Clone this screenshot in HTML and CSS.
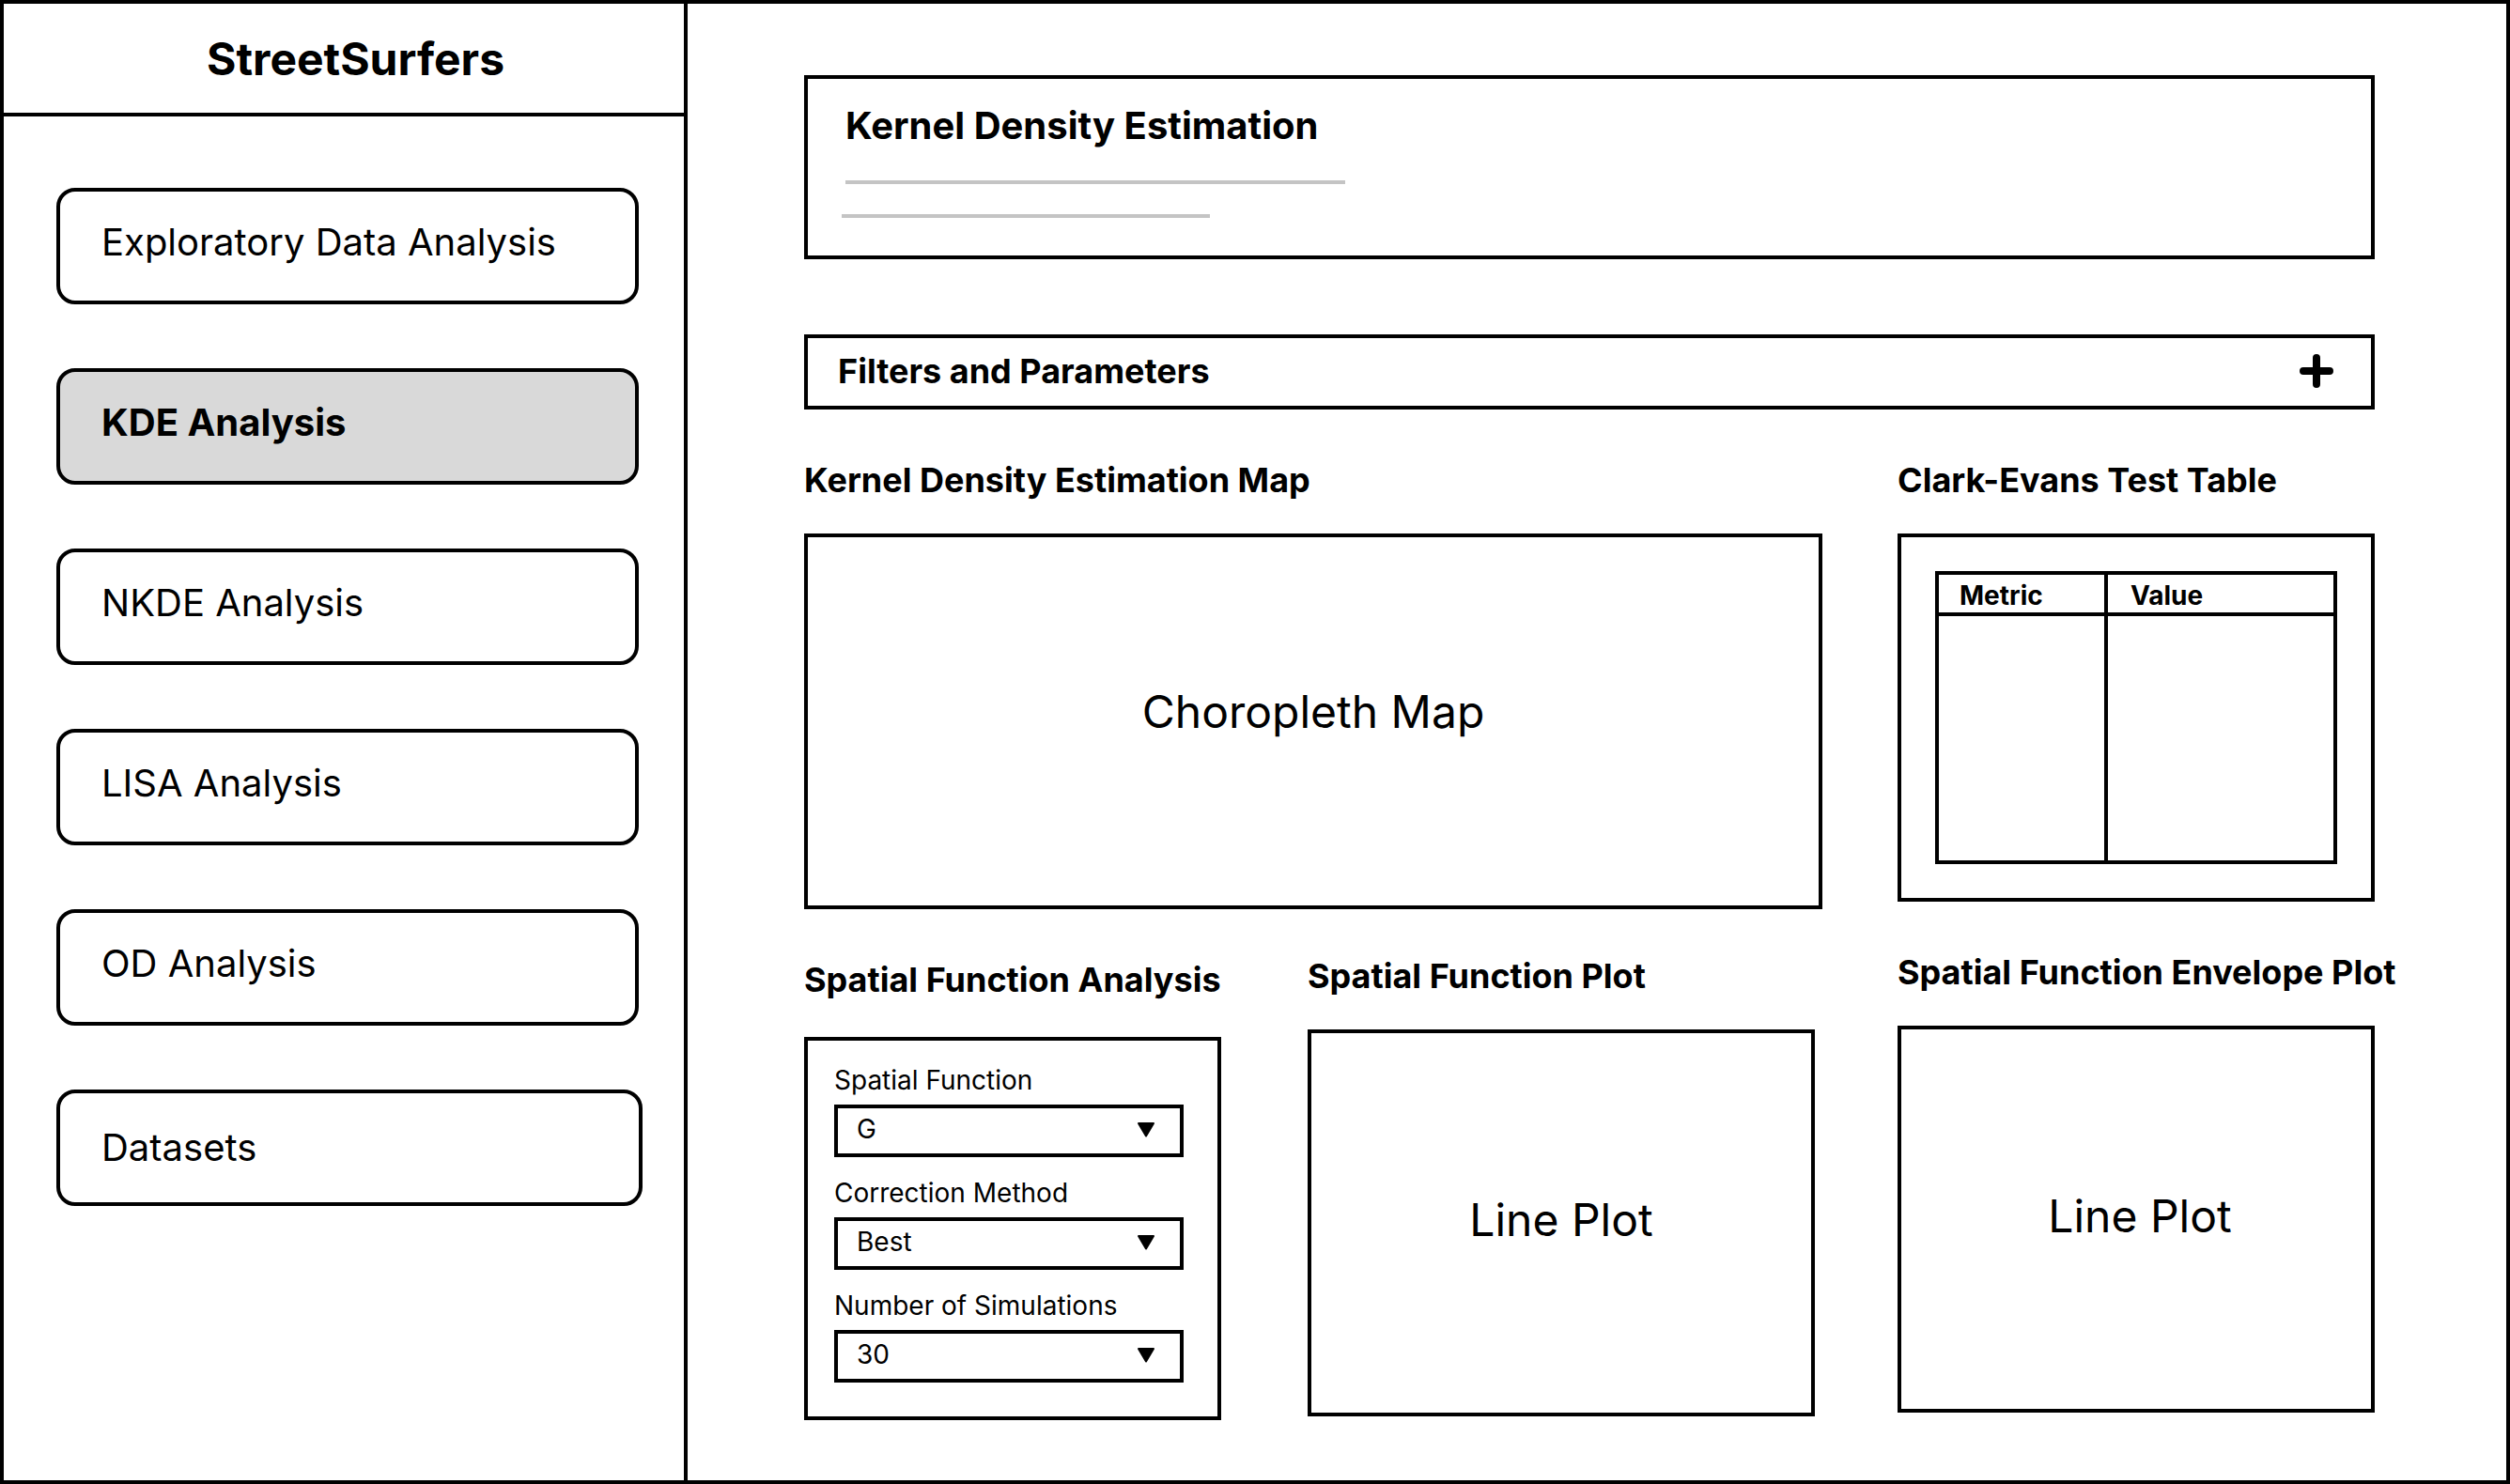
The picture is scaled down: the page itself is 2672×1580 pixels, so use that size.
FILE: index.html
```html
<!DOCTYPE html>
<html lang="en">
<head>
  <meta charset="utf-8">
  <meta name="viewport" content="width=device-width, initial-scale=1">
  <title>StreetSurfers – KDE Analysis</title>
  <link rel="stylesheet" href="styles.css">
</head>
<body>
  <div class="app">
    <aside class="sidebar">
      <header class="brand">StreetSurfers</header>
      <nav class="nav" aria-label="Analyses">
        <a class="nav-link" href="#eda">Exploratory Data Analysis</a>
        <a class="nav-link nav-link-active" href="#kde" aria-current="page">KDE Analysis</a>
        <a class="nav-link" href="#nkde">NKDE Analysis</a>
        <a class="nav-link" href="#lisa">LISA Analysis</a>
        <a class="nav-link" href="#od">OD Analysis</a>
        <a class="nav-link nav-link-data" href="#datasets">Datasets</a>
      </nav>
    </aside>

    <main class="main">
      <section class="intro">
        <h1 class="intro-title">Kernel Density Estimation</h1>
        <div class="intro-line intro-line-long"></div>
        <div class="intro-line intro-line-short"></div>
      </section>

      <button class="filters" type="button" aria-expanded="false">
        <span>Filters and Parameters</span>
        <svg class="plus" viewBox="0 0 36 36" aria-hidden="true">
          <path d="M18 4v28M4 18h28" fill="none" stroke="#000" stroke-width="8" stroke-linecap="round"/>
        </svg>
      </button>

      <div class="board">
        <div class="column column-wide">
          <section class="panel">
            <h2 class="panel-title">Kernel Density Estimation Map</h2>
            <div class="box map">Choropleth Map</div>
          </section>

          <div class="functions">
            <section class="panel panel-form">
              <h2 class="panel-title">Spatial Function Analysis</h2>
              <form class="box form">
                <div class="field">
                  <label class="field-label" for="function">Spatial Function</label>
                  <div class="select">
                    <select class="select-input" id="function"><option>G</option></select>
                    <svg class="select-arrow" viewBox="0 0 20 16" aria-hidden="true"><path d="M2 1h16L10 14.500z" stroke="#000" stroke-width="2" stroke-linejoin="round"/></svg>
                  </div>
                </div>
                <div class="field">
                  <label class="field-label" for="correction">Correction Method</label>
                  <div class="select">
                    <select class="select-input" id="correction"><option>Best</option></select>
                    <svg class="select-arrow" viewBox="0 0 20 16" aria-hidden="true"><path d="M2 1h16L10 14.500z" stroke="#000" stroke-width="2" stroke-linejoin="round"/></svg>
                  </div>
                </div>
                <div class="field">
                  <label class="field-label" for="simulations">Number of Simulations</label>
                  <div class="select">
                    <select class="select-input" id="simulations"><option>30</option></select>
                    <svg class="select-arrow" viewBox="0 0 20 16" aria-hidden="true"><path d="M2 1h16L10 14.500z" stroke="#000" stroke-width="2" stroke-linejoin="round"/></svg>
                  </div>
                </div>
              </form>
            </section>

            <section class="panel">
              <h2 class="panel-title">Spatial Function Plot</h2>
              <div class="box plot">Line Plot</div>
            </section>
          </div>
        </div>

        <div class="column">
          <section class="panel">
            <h2 class="panel-title">Clark-Evans Test Table</h2>
            <div class="box table-box">
              <table class="results">
                <thead>
                  <tr><th class="metric" scope="col">Metric</th><th class="value" scope="col">Value</th></tr>
                </thead>
                <tbody>
                  <tr><td></td><td></td></tr>
                </tbody>
              </table>
            </div>
          </section>

          <section class="panel">
            <h2 class="panel-title">Spatial Function Envelope Plot</h2>
            <div class="box plot plot-envelope">Line Plot</div>
          </section>
        </div>
      </div>
    </main>
  </div>
</body>
</html>
```
FILE: styles.css
```css
* {
  box-sizing: border-box;
}

body {
  margin: 0;
  background: #fff;
  color: #000;
  font-family: Inter, "Liberation Sans", sans-serif;
}

.app {
  display: grid;
  grid-template-columns: 728px minmax(0, 1fr);
  min-height: 100vh;
  border: 4px solid #000;
}

/* Sidebar */

.sidebar {
  border-right: 4px solid #000;
}

.brand {
  padding: 30px 24px 28px 216px;
  border-bottom: 4px solid #000;
  font-size: 48px;
  line-height: 58px;
  font-weight: 700;
}

.nav {
  display: flex;
  flex-direction: column;
  gap: 68px;
  padding: 76px 48px 76px 56px;
}

.nav-link {
  padding: 30px 44px 38px;
  border: 4px solid #000;
  border-radius: 20px;
  color: inherit;
  font-size: 40px;
  line-height: 48px;
  text-decoration: none;
}

.nav-link-active {
  background: #d9d9d9;
  font-weight: 700;
}

.nav-link-data {
  margin-right: -4px;
  padding-block: 34px;
}

/* Main area */

.main {
  padding: 76px 140px 64px 124px;
}

.intro {
  padding: 26px 40px 40px;
  border: 4px solid #000;
}

.intro-title {
  margin: 0 0 34px;
  font-size: 40px;
  line-height: 48px;
  font-weight: 700;
}

.intro-line {
  height: 4px;
  background: #c4c4c4;
}

.intro-line-long {
  max-width: 532px;
}

.intro-line-short {
  max-width: 392px;
  margin: 32px 0 0 -4px;
}

.filters {
  display: flex;
  align-items: center;
  justify-content: space-between;
  width: 100%;
  min-height: 80px;
  margin-top: 80px;
  padding: 0 40px 2px 32px;
  border: 4px solid #000;
  background: none;
  color: inherit;
  font: 700 36px/46px Inter, "Liberation Sans", sans-serif;
}

.plus {
  width: 36px;
  height: 36px;
}

.board {
  display: grid;
  grid-template-columns: minmax(0, 1fr) 508px;
  gap: 80px;
  margin-top: 52px;
}

.column {
  display: flex;
  flex-direction: column;
  gap: 52px;
}

.column-wide {
  gap: 48px;
}

.panel-title {
  margin: 0 0 34px;
  font-size: 36px;
  line-height: 46px;
  font-weight: 700;
  white-space: nowrap;
}

.box {
  border: 4px solid #000;
}

.map,
.plot {
  display: flex;
  align-items: center;
  justify-content: center;
  font-size: 48px;
  line-height: 58px;
}

.map {
  min-height: 400px;
  padding-bottom: 20px;
}

.plot {
  min-height: 412px;
  padding-bottom: 6px;
}

.plot-envelope {
  padding-left: 8px;
}

.functions {
  display: grid;
  grid-template-columns: 444px minmax(0, 1fr);
  gap: 92px;
  padding-right: 8px;
}

/* Function form */

.panel-form {
  padding-top: 4px;
}

.panel-form .panel-title {
  margin-bottom: 38px;
}

.form {
  display: flex;
  flex-direction: column;
  gap: 20px;
  padding: 24px 36px 36px 28px;
}

.field {
  display: flex;
  flex-direction: column;
  gap: 8px;
}

.field-label {
  font-size: 28px;
  line-height: 36px;
}

.select {
  display: grid;
  align-items: center;
}

.select-input,
.select-arrow {
  grid-area: 1 / 1;
}

.select-input {
  width: 100%;
  height: 56px;
  padding: 0 60px 4px 20px;
  border: 4px solid #000;
  border-radius: 0;
  appearance: none;
  background: #fff;
  color: inherit;
  font: 28px/36px Inter, "Liberation Sans", sans-serif;
}

.select-arrow {
  justify-self: end;
  width: 20px;
  height: 16px;
  margin: 0 30px 2px 0;
  pointer-events: none;
}

/* Results table */

.table-box {
  min-height: 392px;
  padding: 36px;
}

.results {
  width: 100%;
  height: 312px;
  border-collapse: collapse;
  table-layout: fixed;
}

.results th,
.results td {
  border: 4px solid #000;
}

.results th {
  height: 44px;
  padding: 4px 22px 0;
  font-size: 28px;
  line-height: 36px;
  font-weight: 700;
  text-align: left;
}

.results .metric {
  width: 180px;
}

.results .value {
  padding-left: 24px;
}
```
